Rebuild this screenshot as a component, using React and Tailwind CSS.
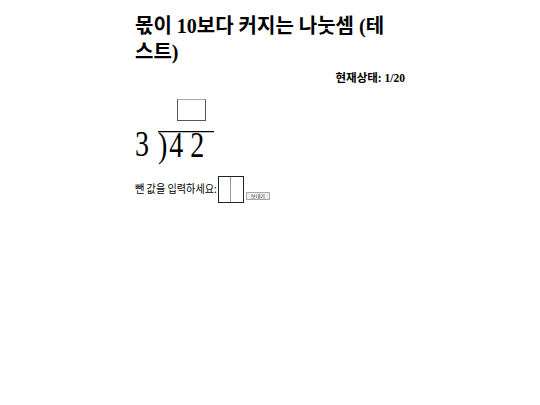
export default function App() {
  return (
    <div className="w-full bg-white min-h-[405px]" style={{ fontFamily: '"Liberation Serif", "Noto Sans CJK KR", serif' }}>
      <div className="w-[270px] mx-auto pt-[13px] text-black">
        <h1 className="text-[20px] leading-[26px] font-bold m-0 pr-[12px]">몫이 10보다 커지는 나눗셈 (테스트)</h1>
        <div className="text-right text-[11.5px] leading-[14px] font-bold mt-[6px]">현재상태: 1/20</div>
        <div className="mt-[14px] flex">
          <div className="ml-[42px] w-[29px] h-[22px] border border-[#555] border-t-[#aaa] bg-white"></div>
        </div>
        <div className="mt-[10px] h-[22px]">
          <div className="flex items-start text-[28px] leading-[22px] origin-top scale-y-[1.25]">
            <span className="whitespace-pre">3 </span>
            <span className="ml-[2px] border-t border-black pr-[10px] flex">
              <span>)</span>
              <span className="ml-[2px] whitespace-pre">4 2</span>
            </span>
          </div>
        </div>
        <div className="flex items-end mt-[23px]">
          <span className="inline-block w-[83px] whitespace-pre mb-[3px]">
            <span className="inline-block origin-left scale-x-[0.92] text-[11px] leading-[12px]" style={{ fontFamily: '"Noto Sans CJK KR", sans-serif' }}>뺀 값을 입력하세요:</span>
          </span>
          <div className="w-[26px] h-[27px] border border-[#222] flex">
            <div className="w-[12px] h-full border-r border-[#999]"></div>
          </div>
          <button className="ml-[2px] mb-[3px] h-[8px] w-[24px] border border-[#aaa] bg-[#eee] text-[5px] leading-[6px] flex items-center justify-center text-[#333]" style={{ fontFamily: '"Noto Sans CJK KR", sans-serif' }}>보내기</button>
        </div>
      </div>
    </div>
  );
}
